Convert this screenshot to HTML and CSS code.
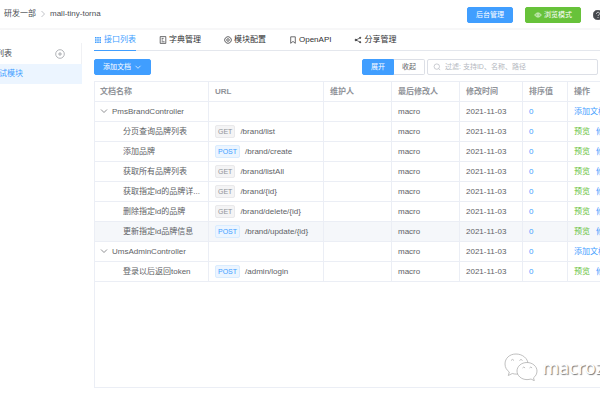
FILE: index.html
```html
<!DOCTYPE html>
<html lang="zh-CN">
<head>
  <meta charset="UTF-8">
  <title>mall-tiny-torna</title>
  <link rel="stylesheet" href="styles.css">
</head>
<body>
<header class="navbar">
  <nav class="breadcrumb">
    <span>研发一部</span>
    <svg class="sep" viewBox="0 0 8 8"><path d="M2.5 1 5.5 4 2.5 7"/></svg>
    <span>mall-tiny-torna</span>
  </nav>
  <div class="nav-right">
    <button class="btn primary">后台管理</button>
    <button class="btn success">
      <svg class="icon" viewBox="0 0 8 8"><path d="M.7 4C2.4 1.3 5.6 1.3 7.3 4 5.6 6.7 2.4 6.7.7 4z"/><circle cx="4" cy="4" r="1.2"/></svg>
      浏览模式
    </button>
    <svg class="help" viewBox="0 0 10 10"><circle cx="5" cy="5" r="5" fill="#45484d"/><path d="M3.4 3.900c0-2.200 3.300-2.100 3.300-.2C6.700 4.800 5 4.700 5 6M5 7v1" fill="none" stroke="#fff"/></svg>
  </div>
</header>

<div class="app-main">
  <aside class="sidebar">
    <div class="module-title">
      <span>模块列表</span>
      <button class="add" aria-label="新增模块">
        <svg viewBox="0 0 10 10"><circle cx="5" cy="5" r="4.300"/><path d="M5 3v4M3 5h4"/></svg>
      </button>
    </div>
    <a class="module active" href="#">测试模块</a>
  </aside>

  <main class="content">
    <nav class="tabs">
      <a class="tab active" href="#"><svg class="icon solid" viewBox="0 0 8 8"><path d="M1 1h1.600v1.600H1zM3.200 1h1.600v1.600H3.200zM5.400 1H7v1.600H5.400zM1 3.200h1.600v1.600H1zM3.200 3.200h1.600v1.600H3.200zM5.400 3.200H7v1.600H5.400zM1 5.400h1.600V7H1zM3.200 5.400h1.600V7H3.200zM5.400 5.400H7V7H5.400z"/></svg>接口列表</a>
      <a class="tab" href="#"><svg class="icon" viewBox="0 0 8 8"><path d="M1.200.6h5.600v6.800H1.200zM2.600 2.400h2M2.600 4h1.500M2.600 5.800h3"/></svg>字典管理</a>
      <a class="tab" href="#"><svg class="icon" viewBox="0 0 8 8"><path d="M2.700.8h2.600l.5 1 1.200.5.4 1.700-.4 1.700-1.200.5-.5 1H2.700l-.5-1L1 5.700.6 4 1 2.300l1.200-.5z"/><circle cx="4" cy="4" r="1.300"/></svg>模块配置</a>
      <a class="tab" href="#"><svg class="icon" viewBox="0 0 8 8"><path d="M1.700.8h4.600v6.500L4 5.400 1.700 7.300z"/></svg>OpenAPI</a>
      <a class="tab" href="#"><svg class="icon share" viewBox="0 0 8 8"><path d="M6.200 1.800 2 4l4.200 2.200"/><circle cx="1.800" cy="4" r=".8"/><circle cx="6.200" cy="1.800" r=".6"/><circle cx="6.200" cy="6.200" r=".6"/></svg>分享管理</a>
    </nav>

    <div class="toolbar">
      <button class="btn primary add-doc">添加文档 <svg class="icon" viewBox="0 0 8 8"><path d="M1.500 2.800 4 5.300l2.500-2.500"/></svg></button>
      <div class="filters">
        <div class="btn-group">
          <button class="btn primary">展开</button>
          <button class="btn">收起</button>
        </div>
        <label class="search">
          <svg class="icon" viewBox="0 0 8 8"><circle cx="3.800" cy="3.600" r="2.700"/><path d="m5.700 5.600 1.500 1.500"/></svg>
          <input type="text" aria-label="过滤" placeholder="过滤: 支持ID、名称、路径">
        </label>
      </div>
    </div>

    <div class="table-box">
      <table class="doc-table">
        <colgroup>
          <col class="c-name"><col class="c-url"><col class="c-owner"><col class="c-user"><col class="c-time"><col class="c-order"><col>
        </colgroup>
        <thead>
          <tr><th>文档名称</th><th>URL</th><th>维护人</th><th>最后修改人</th><th>修改时间</th><th>排序值</th><th>操作</th></tr>
        </thead>
        <tbody>
          <tr>
            <td><svg class="arrow" viewBox="0 0 8 8"><path d="M1 2.500 4 5.500l3-3"/></svg>PmsBrandController</td>
            <td></td><td></td><td>macro</td><td>2021-11-03</td><td><a href="#">0</a></td>
            <td><a href="#">添加文档</a></td>
          </tr>
          <tr>
            <td class="child">分页查询品牌列表</td>
            <td><span class="tag get">GET</span>/brand/list</td>
            <td></td><td>macro</td><td>2021-11-03</td><td><a href="#">0</a></td>
            <td><a class="view" href="#">预览</a><a href="#">修改</a></td>
          </tr>
          <tr>
            <td class="child">添加品牌</td>
            <td><span class="tag post">POST</span>/brand/create</td>
            <td></td><td>macro</td><td>2021-11-03</td><td><a href="#">0</a></td>
            <td><a class="view" href="#">预览</a><a href="#">修改</a></td>
          </tr>
          <tr>
            <td class="child">获取所有品牌列表</td>
            <td><span class="tag get">GET</span>/brand/listAll</td>
            <td></td><td>macro</td><td>2021-11-03</td><td><a href="#">0</a></td>
            <td><a class="view" href="#">预览</a><a href="#">修改</a></td>
          </tr>
          <tr>
            <td class="child">获取指定id的品牌详...</td>
            <td><span class="tag get">GET</span>/brand/{id}</td>
            <td></td><td>macro</td><td>2021-11-03</td><td><a href="#">0</a></td>
            <td><a class="view" href="#">预览</a><a href="#">修改</a></td>
          </tr>
          <tr>
            <td class="child">删除指定id的品牌</td>
            <td><span class="tag get">GET</span>/brand/delete/{id}</td>
            <td></td><td>macro</td><td>2021-11-03</td><td><a href="#">0</a></td>
            <td><a class="view" href="#">预览</a><a href="#">修改</a></td>
          </tr>
          <tr class="hover">
            <td class="child">更新指定id品牌信息</td>
            <td><span class="tag post">POST</span>/brand/update/{id}</td>
            <td></td><td>macro</td><td>2021-11-03</td><td><a href="#">0</a></td>
            <td><a class="view" href="#">预览</a><a href="#">修改</a></td>
          </tr>
          <tr>
            <td><svg class="arrow" viewBox="0 0 8 8"><path d="M1 2.500 4 5.500l3-3"/></svg>UmsAdminController</td>
            <td></td><td></td><td>macro</td><td>2021-11-03</td><td><a href="#">0</a></td>
            <td><a href="#">添加文档</a></td>
          </tr>
          <tr>
            <td class="child">登录以后返回token</td>
            <td><span class="tag post">POST</span>/admin/login</td>
            <td></td><td>macro</td><td>2021-11-03</td><td><a href="#">0</a></td>
            <td><a class="view" href="#">预览</a><a href="#">修改</a></td>
          </tr>
        </tbody>
      </table>
    </div>
  </main>
</div>

<div class="watermark">
  <svg viewBox="0 0 34 28">
    <path d="M12 1C5.500 1 1 5.300 1 11c0 3.500 1.800 6.200 4.300 8l-1 3.500 4-2c1.500.5 3 .6 4.700.6 6.300 0 11-4.600 11-10.100S18.500 1 12 1z"/>
    <path d="M23 9.500c-5.700 0-10 3.900-10 8.500s4.300 8.600 10 8.600c1.500 0 2.700-.2 4-.6l3.300 1.700-.8-2.900c2.200-1.600 3.500-4 3.500-6.800 0-4.600-4.500-8.500-10-8.500z"/>
    <path d="M7 7.500q1.500-2.200 3 0M15.500 7.500q1.500-2.200 3 0M18.500 15q1.300-2 2.600 0M25.500 15q1.300-2 2.600 0"/>
  </svg>
  <span>macroz</span>
</div>
</body>
</html>
```
FILE: styles.css
```css
* {
  box-sizing: border-box;
}
body {
  display: flex;
  flex-direction: column;
  min-height: 100vh;
  margin: 0;
  overflow: hidden;
  font-family: "Liberation Sans", "Noto Sans CJK SC", sans-serif;
  font-size: 8px;
  line-height: 12px;
  color: #606266;
  background: #fff;
}
a {
  color: #409eff;
  text-decoration: none;
}
svg {
  flex: none;
  fill: none;
  stroke: currentColor;
  stroke-width: .7;
}
.icon {
  width: 8px;
  height: 8px;
}

/* top bar */
.navbar {
  display: flex;
  align-items: center;
  justify-content: space-between;
  height: 30px;
  padding-left: 4px;
  border-bottom: 2px solid #f7f7f8;
}
.breadcrumb {
  display: flex;
  align-items: center;
  gap: 3px;
  color: #4c4f55;
}
.sep {
  width: 8px;
  height: 8px;
  color: #a8abb2;
}
.nav-right {
  display: flex;
  align-items: center;
  gap: 12px;
  padding-top: 2px;
  margin-right: -3px;
}
.help {
  width: 10px;
  height: 10px;
}
.btn {
  display: flex;
  align-items: center;
  justify-content: center;
  gap: 2px;
  height: 16px;
  padding: 0 8px;
  border: 1px solid #dcdfe6;
  border-radius: 2px;
  background: #fff;
  color: #606266;
  font: inherit;
  font-size: 7px;
  white-space: nowrap;
  cursor: pointer;
}
.btn.primary {
  background: #409eff;
  border-color: #409eff;
  color: #fff;
}
.btn.success {
  background: #67c23a;
  border-color: #67c23a;
  color: #fff;
}

/* module list */
.app-main {
  display: flex;
  flex: 1;
}
.sidebar {
  flex: none;
  width: 106px;
  margin: 13px 0 0 -24px;
}
.module-title {
  display: flex;
  align-items: center;
  justify-content: space-between;
  height: 21px;
  padding: 0 16px 0 4px;
  border-right: 1px solid #f0f1f4;
  color: #4c4f55;
}
.add {
  display: flex;
  padding: 0;
  border: none;
  background: none;
  color: #909399;
}
.add svg {
  width: 10px;
  height: 10px;
}
.module {
  display: block;
  padding-left: 15px;
  line-height: 20px;
}
.module.active {
  background: #ecf5ff;
}

/* tabs */
.content {
  display: flex;
  flex: 1;
  flex-direction: column;
  min-width: 0;
  padding: 0 0 12px 12px;
}
.tabs {
  display: flex;
  gap: 23px;
  height: 21px;
  border-bottom: 1px solid #e4e7ed;
}
.tab {
  display: flex;
  align-items: center;
  gap: 2px;
  height: 21px;
  border-bottom: 1px solid transparent;
  color: #303133;
}
.tab.active {
  border-color: #409eff;
  color: #409eff;
}
.icon.solid {
  fill: currentColor;
  stroke: none;
}
.icon.share circle {
  fill: currentColor;
}

.toolbar {
  display: flex;
  justify-content: space-between;
  padding: 8px 2px 6px 0;
}
.add-doc {
  gap: 3px;
}
.filters {
  display: flex;
  gap: 2px;
}
.btn-group {
  display: flex;
}
.btn-group .btn:first-child {
  border-radius: 2px 0 0 2px;
}
.btn-group .btn:last-child {
  border-left: none;
  border-radius: 0 2px 2px 0;
}
.search {
  display: flex;
  align-items: center;
  gap: 4px;
  width: 171px;
  height: 16px;
  padding: 0 5px;
  border: 1px solid #dcdfe6;
  border-radius: 2px;
  color: #b4b8c0;
}
.search input {
  flex: 1;
  min-width: 0;
  padding: 0;
  border: none;
  outline: none;
  background: none;
  font: inherit;
  font-size: 7px;
  color: #606266;
}
.search input::placeholder {
  color: #b4b8c0;
}

/* doc table */
.table-box {
  flex: 1;
  border: solid #ebeef5;
  border-width: 1px 0 1px 1px;
}
.doc-table {
  width: 100%;
  table-layout: fixed;
  border-collapse: separate;
  border-spacing: 0;
}
.c-name { width: 114px; }
.c-url { width: 115px; }
.c-owner { width: 68px; }
.c-user { width: 68px; }
.c-time { width: 63px; }
.c-order { width: 45px; }
.doc-table th,
.doc-table td {
  height: 20px;
  padding: 0 0 0 6px;
  border-right: 1px solid #ebeef5;
  border-bottom: 1px solid #ebeef5;
  text-align: left;
  white-space: nowrap;
  overflow: hidden;
}
.doc-table th:first-child,
.doc-table td:first-child {
  padding-left: 5px;
}
.doc-table th:last-child,
.doc-table td:last-child {
  border-right: none;
}
.doc-table th {
  color: #909399;
}
.doc-table td.child:first-child {
  padding-left: 28px;
}
.doc-table .hover {
  background: #f5f7fa;
}
.arrow {
  width: 8px;
  height: 8px;
  margin-right: 4px;
  vertical-align: middle;
}
.tag {
  display: inline-block;
  margin-right: 5px;
  padding: 0 2px;
  border: 1px solid #e9e9eb;
  border-radius: 2px;
  font-size: 7px;
  line-height: 11px;
}
.tag.get {
  background: #f4f4f5;
  color: #909399;
}
.tag.post {
  background: #ecf5ff;
  border-color: #d9ecff;
  color: #409eff;
}
.doc-table .view {
  margin-right: 6px;
  color: #67c23a;
}

/* watermark over the page corner */
.watermark {
  position: absolute;
  right: -4px;
  bottom: 19px;
  display: flex;
  align-items: center;
  gap: 4px;
  color: #fff;
  font-family: "Noto Sans", sans-serif;
  font-size: 18px;
  line-height: 28px;
  text-shadow: 1px 1px 1px #777;
}
.watermark svg {
  width: 34px;
  height: 28px;
  fill: #fff;
  stroke: #a5a5a5;
}
```
